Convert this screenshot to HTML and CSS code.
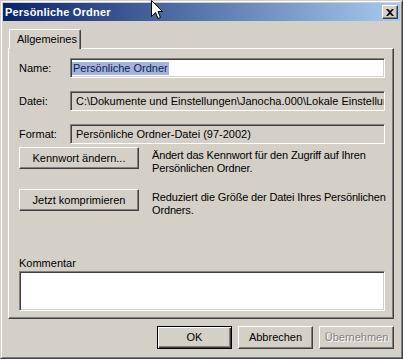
FILE: index.html
```html
<!DOCTYPE html>
<html lang="de">
<head>
<meta charset="utf-8">
<title>Persönliche Ordner</title>
<link rel="stylesheet" href="styles.css">
</head>
<body>
<div class="window">
  <div class="frame">
    <div class="titlebar">
      <span class="title">Persönliche Ordner</span>
      <div class="close">
        <svg width="8" height="7" viewBox="0 0 8 7"><path d="M0 0h2l2 2 2-2h2L5 3.5 8 7H6L4 5 2 7H0l3-3.5z" fill="#000"/></svg>
      </div>
    </div>
    <div class="client">
      <div class="tabs"><div class="tab">Allgemeines</div></div>
      <div class="panel">
        <div class="field">
          <span class="label">Name:</span>
          <div class="edit white"><span class="sel">Persönliche Ordner</span></div>
        </div>
        <div class="field gap13">
          <span class="label">Datei:</span>
          <div class="edit ro">C:\Dokumente und Einstellungen\Janocha.000\Lokale Einstellungen\Anwendungsdaten\Microsoft\Outlook\outlook.pst</div>
        </div>
        <div class="field gap13">
          <span class="label">Format:</span>
          <div class="edit ro">Persönliche Ordner-Datei (97-2002)</div>
        </div>
        <div class="action first">
          <div class="btn wide">Kennwort ändern...</div>
          <div class="desc">Ändert das Kennwort für den Zugriff auf Ihren<br>Persönlichen Ordner.</div>
        </div>
        <div class="action second">
          <div class="btn wide">Jetzt komprimieren</div>
          <div class="desc">Reduziert die Größe der Datei Ihres Persönlichen<br>Ordners.</div>
        </div>
        <div class="comment-label">Kommentar</div>
        <div class="edit white comment"></div>
      </div>
      <div class="buttons">
        <div class="btn dlg default">OK</div>
        <div class="btn dlg">Abbrechen</div>
        <div class="btn dlg disabled">Übernehmen</div>
      </div>
    </div>
  </div>
  <svg class="cursor" width="12" height="20" viewBox="0 0 12 20">
    <path d="M0.5 0.5V16.5L4.5 12.5L7 18.5L9.5 17.5L7 11.5H11.5Z" fill="#fff" stroke="#000" stroke-width="1"/>
  </svg>
</div>
</body>
</html>
```
FILE: styles.css
```css
* { box-sizing: border-box; }
html, body { margin: 0; padding: 0; background: #D4D0C8; }
body {
  font-family: "Liberation Sans", Arial, sans-serif;
  font-size: 11px;
  line-height: 13px;
  color: #000;
}
.window {
  position: relative;
  width: 403px;
  height: 359px;
  background: #D4D0C8;
  border: 1px solid;
  border-color: #D4D0C8 #404040 #404040 #D4D0C8;
}
.frame {
  height: 100%;
  border: 1px solid;
  border-color: #FFFFFF #808080 #808080 #FFFFFF;
  padding: 1px;
  display: flex;
  flex-direction: column;
}
.titlebar {
  height: 18px;
  flex: none;
  background: linear-gradient(to right, #0A246A, #A6CAF0);
  display: flex;
  align-items: center;
  justify-content: space-between;
  padding: 0 2px 0 2px;
}
.title {
  color: #fff;
  font-weight: bold;
  font-size: 11px;
  letter-spacing: 0.2px;
}
.close {
  width: 16px;
  height: 14px;
  background: #D4D0C8;
  border: 1px solid;
  border-color: #FFFFFF #404040 #404040 #FFFFFF;
  box-shadow: inset -1px -1px #808080;
  display: flex;
  align-items: center;
  justify-content: center;
  padding-right: 1px;
}
.client {
  flex: 1;
  padding: 8px 6px 0 5px;
  display: flex;
  flex-direction: column;
}
.tabs {
  display: flex;
  height: 20px;
  margin-bottom: -1px;
  position: relative;
  z-index: 1;
}
.tab {
  margin-left: 1px;
  width: 72px;
  height: 20px;
  background: #D4D0C8;
  border-top: 1px solid #fff;
  border-left: 1px solid #fff;
  border-right: 1px solid #404040;
  box-shadow: inset -1px 0 #808080;
  border-radius: 2px 2px 0 0;
  padding: 3px 0 0 7px;
  white-space: nowrap;
}
.panel {
  height: 271px;
  border: 1px solid;
  border-color: #FFFFFF #404040 #404040 #FFFFFF;
  box-shadow: inset -1px -1px #808080;
  padding: 9px 8px 0 10px;
  display: flex;
  flex-direction: column;
}
.field {
  display: flex;
  align-items: center;
  height: 20px;
  flex: none;
}
.gap13 { margin-top: 13px; }
.label {
  width: 51px;
  flex: none;
}
.edit {
  border: 1px solid;
  border-color: #808080 #FFFFFF #FFFFFF #808080;
  box-shadow: inset 1px 1px #404040, inset -1px -1px #D4D0C8;
  white-space: nowrap;
  overflow: hidden;
}
.field .edit {
  flex: 1;
  height: 20px;
  display: flex;
  align-items: center;
}
.white { background: #fff; }
.ro { background: #D4D0C8; padding-left: 5px; }
.white .sel {
  margin-left: 1px;
  padding: 0 1px;
  background: #A3B4D8;
  color: #0E1F5C;
}
.action {
  display: flex;
  align-items: flex-start;
  height: 22px;
  flex: none;
}
.action.first { margin-top: 3px; }
.action.second { margin-top: 20px; }
.btn {
  background: #D4D0C8;
  border: 1px solid;
  border-color: #FFFFFF #404040 #404040 #FFFFFF;
  box-shadow: inset -1px -1px #808080;
  display: flex;
  align-items: center;
  justify-content: center;
  white-space: nowrap;
}
.wide {
  width: 120px;
  height: 22px;
  flex: none;
}
.desc {
  margin-left: 13px;
  padding-top: 2px;
  white-space: nowrap;
  letter-spacing: -0.15px;
}
.comment-label {
  margin-top: 46px;
  height: 13px;
  flex: none;
}
.comment {
  margin-top: 1px;
  height: 40px;
  flex: none;
}
.buttons {
  margin-top: 7px;
  display: flex;
  justify-content: flex-end;
  gap: 6px;
}
.dlg {
  width: 75px;
  height: 23px;
}
.default {
  border: 1px solid #000;
  box-shadow: inset 1px 1px #fff, inset -1px -1px #404040, inset -2px -2px #808080;
}
.disabled {
  color: #808080;
  text-shadow: 1px 1px 0 #fff;
}
.cursor {
  position: absolute;
  left: 150px;
  top: -1px;
}
```
